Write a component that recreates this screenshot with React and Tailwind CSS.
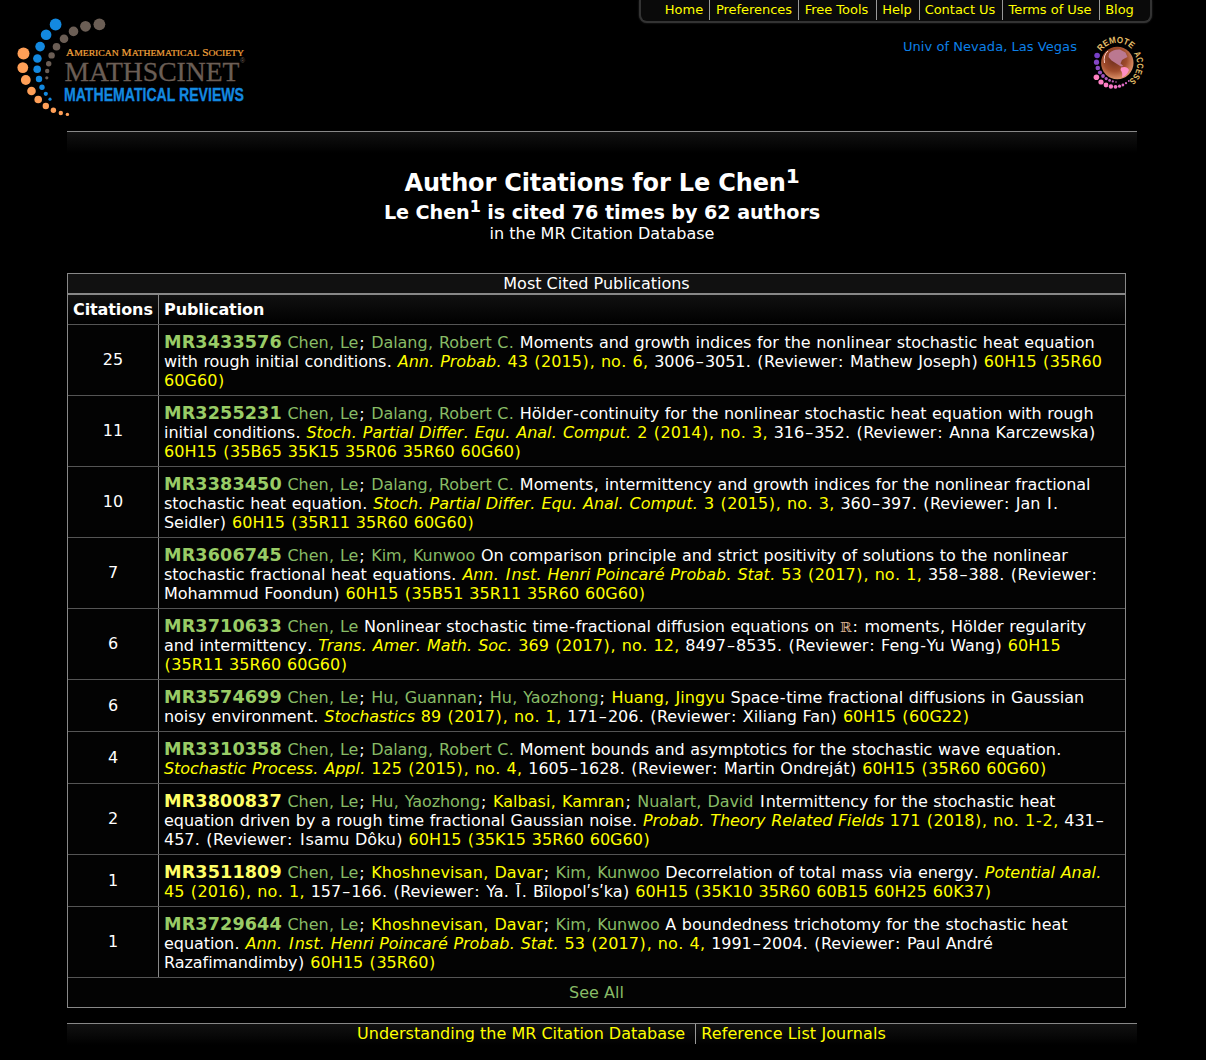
import React from 'react';

const STYLES = {
  M: 'text-[17.6px] font-bold text-[#99cc66] tracking-[0.12px]',
  Y: 'text-[17.6px] font-bold text-[#ffff66] tracking-[0.12px]',
  g: 'text-[#88bb66]',
  y: 'text-[#ffff00] tracking-[0.05px]',
  i: 'italic text-[#ffff00]',
  w: 'text-white',
  b: "font-['DejaVu_Serif','DejaVu_Sans',serif] text-[14px] text-[#d8b090]",
};

// Punctuation and the capital I are set a little wider than the letters around them.
const WIDE = {
  ',': 'mx-[0.36px]',
  '.': 'mx-[0.36px]',
  ';': 'mx-[0.93px]',
  ':': 'mx-[0.93px]',
  '(': 'mx-[0.5px]',
  ')': 'mx-[0.5px]',
  '-': 'mx-[0.75px]',
  '–': 'mx-[1.1px]',
  I: 'mx-[1px]',
  Ī: 'mx-[1px]',
};

const Spaced = ({ children }) =>
  children.split(/([,.;:()–IĪ-])/).map((t, k) => (WIDE[t] ? <span key={k} className={WIDE[t]}>{t}</span> : t));

// Each line is a list of [style, text] runs.
const le = ['g', 'Chen, Le'];
const dalang = ['g', 'Dalang, Robert C.'];
const kim = ['g', 'Kim, Kunwoo'];
const sep = ['w', '; '];
const sp = ['w', ' '];

const ROWS = [
  [25, [
    [['M', 'MR3433576'], sp, le, sep, dalang, ['w', ' Moments and growth indices for the nonlinear stochastic heat equation']],
    [['w', 'with rough initial conditions. '], ['i', 'Ann. Probab.'], ['y', ' 43 (2015), no. 6,'], ['w', ' 3006–3051. (Reviewer: Mathew Joseph) '], ['y', '60H15 (35R60']],
    [['y', '60G60)']],
  ]],
  [11, [
    [['M', 'MR3255231'], sp, le, sep, dalang, ['w', ' Hölder-continuity for the nonlinear stochastic heat equation with rough']],
    [['w', 'initial conditions. '], ['i', 'Stoch. Partial Differ. Equ. Anal. Comput.'], ['y', ' 2 (2014), no. 3,'], ['w', ' 316–352. (Reviewer: Anna Karczewska)']],
    [['y', '60H15 (35B65 35K15 35R06 35R60 60G60)']],
  ]],
  [10, [
    [['M', 'MR3383450'], sp, le, sep, dalang, ['w', ' Moments, intermittency and growth indices for the nonlinear fractional']],
    [['w', 'stochastic heat equation. '], ['i', 'Stoch. Partial Differ. Equ. Anal. Comput.'], ['y', ' 3 (2015), no. 3,'], ['w', ' 360–397. (Reviewer: Jan I.']],
    [['w', 'Seidler) '], ['y', '60H15 (35R11 35R60 60G60)']],
  ]],
  [7, [
    [['M', 'MR3606745'], sp, le, sep, kim, ['w', ' On comparison principle and strict positivity of solutions to the nonlinear']],
    [['w', 'stochastic fractional heat equations. '], ['i', 'Ann. Inst. Henri Poincaré Probab. Stat.'], ['y', ' 53 (2017), no. 1,'], ['w', ' 358–388. (Reviewer:']],
    [['w', 'Mohammud Foondun) '], ['y', '60H15 (35B51 35R11 35R60 60G60)']],
  ]],
  [6, [
    [['M', 'MR3710633'], sp, le, ['w', ' Nonlinear stochastic time-fractional diffusion equations on '], ['b', 'ℝ'], ['w', ': moments, Hölder regularity']],
    [['w', 'and intermittency. '], ['i', 'Trans. Amer. Math. Soc.'], ['y', ' 369 (2017), no. 12,'], ['w', ' 8497–8535. (Reviewer: Feng-Yu Wang) '], ['y', '60H15']],
    [['y', '(35R11 35R60 60G60)']],
  ]],
  [6, [
    [['M', 'MR3574699'], sp, le, sep, ['g', 'Hu, Guannan'], sep, ['g', 'Hu, Yaozhong'], sep, ['y', 'Huang, Jingyu'], ['w', ' Space-time fractional diffusions in Gaussian']],
    [['w', 'noisy environment. '], ['i', 'Stochastics'], ['y', ' 89 (2017), no. 1,'], ['w', ' 171–206. (Reviewer: Xiliang Fan) '], ['y', '60H15 (60G22)']],
  ]],
  [4, [
    [['M', 'MR3310358'], sp, le, sep, dalang, ['w', ' Moment bounds and asymptotics for the stochastic wave equation.']],
    [['i', 'Stochastic Process. Appl.'], ['y', ' 125 (2015), no. 4,'], ['w', ' 1605–1628. (Reviewer: Martin Ondreját) '], ['y', '60H15 (35R60 60G60)']],
  ]],
  [2, [
    [['Y', 'MR3800837'], sp, le, sep, ['g', 'Hu, Yaozhong'], sep, ['y', 'Kalbasi, Kamran'], sep, ['g', 'Nualart, David'], ['w', ' Intermittency for the stochastic heat']],
    [['w', 'equation driven by a rough time fractional Gaussian noise. '], ['i', 'Probab. Theory Related Fields'], ['y', ' 171 (2018), no. 1-2,'], ['w', ' 431–']],
    [['w', '457. (Reviewer: Isamu Dôku) '], ['y', '60H15 (35K15 35R60 60G60)']],
  ]],
  [1, [
    [['Y', 'MR3511809'], sp, le, sep, ['y', 'Khoshnevisan, Davar'], sep, kim, ['w', ' Decorrelation of total mass via energy. '], ['i', 'Potential Anal.']],
    [['y', '45 (2016), no. 1,'], ['w', ' 157–166. (Reviewer: Ya. Ī. Bīlopolʹsʹka) '], ['y', '60H15 (35K10 35R60 60B15 60H25 60K37)']],
  ]],
  [1, [
    [['M', 'MR3729644'], sp, le, sep, ['y', 'Khoshnevisan, Davar'], sep, kim, ['w', ' A boundedness trichotomy for the stochastic heat']],
    [['w', 'equation. '], ['i', 'Ann. Inst. Henri Poincaré Probab. Stat.'], ['y', ' 53 (2017), no. 4,'], ['w', ' 1991–2004. (Reviewer: Paul André']],
    [['w', 'Razafimandimby) '], ['y', '60H15 (35R60)']],
  ]],
];

const ORANGE = [[23.5, 53.5, 6], [22.8, 67.6, 5.4], [25.8, 80, 4.9], [31.5, 91, 4.3], [38.2, 99.5, 3.8], [45.8, 106, 3.2], [53.4, 110.3, 2.7], [60.8, 113, 2.2], [67.4, 114.4, 1.7]];
const BLUE = [[55.6, 24.5, 5.9], [46.1, 34.8, 5.3], [40.1, 46.6, 4.8], [37.4, 58.5, 4.3], [37.2, 69.2, 3.8], [39, 79, 3.2], [42, 87.2, 2.7], [45.8, 93.8, 2.1], [50, 99.2, 1.6]];
const GRAY = [[99.4, 24.3, 5.9], [85.5, 26.3, 5.4], [73.5, 31.4, 4.8], [64, 38.7, 4.3], [56.5, 46.8, 3.8], [51.6, 55.4, 3.2], [48.7, 63.7, 2.7], [47.2, 71, 2.2], [46.8, 77.8, 1.6]];

const Dots = ({ data, fill }) => data.map(([x, y, r]) => <circle key={x + '-' + y} cx={x} cy={y} r={r} fill={fill} />);

function Logo() {
  return (
    <svg className="block h-[120px] w-[260px] overflow-visible" viewBox="0 0 260 120">
      <Dots data={ORANGE} fill="#ff9f57" />
      <Dots data={BLUE} fill="#1389e0" />
      <Dots data={GRAY} fill="#6b5e55" />
      <text x="66" y="55.7" textLength="178" lengthAdjust="spacingAndGlyphs" fill="#f2a33c" stroke="#f2a33c" strokeWidth=".2" className="font-['Liberation_Serif',serif] text-[10px]">
        A<tspan fontSize="8.6">MERICAN</tspan> M<tspan fontSize="8.6">ATHEMATICAL</tspan> S<tspan fontSize="8.6">OCIETY</tspan>
      </text>
      <text x="64.5" y="81.2" textLength="175" lengthAdjust="spacingAndGlyphs" fill="#6b5e55" stroke="#6b5e55" strokeWidth=".3" className="font-['Liberation_Serif',serif] text-[27.5px]">MATHSCINET</text>
      <text x="240.2" y="62.6" fill="#6b5e55" className="font-['Liberation_Sans',sans-serif] text-[6.5px]">®</text>
      <text x="64" y="100.9" textLength="180" lengthAdjust="spacingAndGlyphs" fill="#1389e0" stroke="#1389e0" strokeWidth=".3" className="font-['Liberation_Sans',sans-serif] text-[17.6px] font-bold">MATHEMATICAL REVIEWS</text>
    </svg>
  );
}

const PURPLE = [[6.1, 19.5, 2.8, '#7840c8'], [5.5, 26.2, 2.6, '#8446c6'], [6.8, 32, 2.3, '#8c4cc4'], [9, 36.5, 2.1, '#9850c0'], [12, 40, 1.9, '#a456be'], [15.2, 42.6, 1.6, '#b05abe'], [18.6, 44.4, 1.4, '#bc60bc'], [21.8, 45.4, 1.1, '#c464bc'], [25, 46, 0.8, '#cc6cbc']];
const PINK = [[5.4, 41.2, 2.8, '#ff80c0'], [10, 46, 2.6, '#ff80c4'], [15, 49, 2.4, '#ff7ec4'], [19.9, 50.5, 2.2, '#f878c4'], [24.5, 50.8, 1.9, '#f074c4'], [28.5, 50.2, 1.6, '#e870c4'], [31.9, 49, 1.4, '#e06cc4'], [35, 47.2, 1.1, '#d868c4'], [37.8, 45, 0.9, '#d064c4']];

function RemoteBadge() {
  return (
    <svg className="block h-[54px] w-[56px] shrink-0 overflow-visible" viewBox="0 0 56 54">
      <defs>
        <radialGradient id="globe" cx="42%" cy="38%" r="62%">
          <stop offset="0" stopColor="#6a2c1c" />
          <stop offset=".6" stopColor="#a04c2c" />
          <stop offset="1" stopColor="#dc9068" />
        </radialGradient>
        <path id="remote" d="M10.2 15.4 A19.4 19.4 0 0 1 42 15" />
        <path id="access" d="M42.6 17.4 A19.4 19.4 0 0 1 36 45.4" />
      </defs>
      <circle cx="26.3" cy="27" r="16.2" fill="url(#globe)" />
      <path d="M18 17.5 Q22 13 29 13.5 L34.5 16.5 L36.5 21 L33.5 22.5 L31 24 L29.5 27.5 L32.5 30 L30 30.5 L26 28 L20.5 24.5 L17.5 21 Z" fill="#bb7890" />
      <path d="M30 31.5 Q36 29.5 38 34 Q36 39.5 31 41.5 Q32 36.5 29.5 34 Z" fill="#ff8fc4" />
      <path d="M13.5 27 Q12 19 17 15" fill="none" stroke="#ffd0c8" strokeWidth="1" />
      {[...PURPLE, ...PINK].map(([x, y, r, fill]) => <circle key={x + '-' + y} cx={x} cy={y} r={r} fill={fill} />)}
      <text fill="#e3bd68" className="font-['Liberation_Sans',sans-serif] text-[9px] font-bold"><textPath href="#remote" textLength="34.5" lengthAdjust="spacingAndGlyphs">REMOTE</textPath></text>
      <text fill="#e3bd68" className="font-['Liberation_Sans',sans-serif] text-[9px] font-bold"><textPath href="#access" textLength="30" lengthAdjust="spacingAndGlyphs">ACCESS</textPath></text>
    </svg>
  );
}

const NAV = [
  ['Home', 'w-[51px]'], ['Preferences', 'w-[89px]'], ['Free Tools', 'w-[78px] pr-0.5'], ['Help', 'w-[43px] pr-0.5'],
  ['Contact Us', 'w-[83px] pr-0.5'], ['Terms of Use', 'w-[97px] pr-0.5'], ['Blog', 'w-[39px]'],
];

function Row({ count, lines }) {
  return (
    <div className="flex border-b border-[#555]">
      <div className={`flex w-[91px] items-center justify-center border-r border-[#888] ${lines.length > 2 ? 'pb-0.5' : ''}`}>{count}</div>
      <div className="pt-2 pb-[5px] pl-[5px]">
        {lines.map((runs, n) => (
          <p key={n} className="h-[19px] leading-[19px] tracking-[-0.05px] whitespace-pre [word-spacing:0.6px]">
            {runs.map(([s, t], k) => <span key={k} className={STYLES[s]}><Spaced>{t}</Spaced></span>)}
          </p>
        ))}
      </div>
    </div>
  );
}

export default function App() {
  return (
    <div className="h-[1060px] w-[1206px] overflow-hidden bg-black font-['DejaVu_Sans',Verdana,sans-serif] text-base leading-[19px] text-white">
      <header className="flex h-[131px] justify-between">
        <Logo />
        <div className="flex w-[567px] flex-col">
          <nav className="flex h-[23px] w-[513px] rounded-b-lg border-x-2 border-b-2 border-[#333] bg-[#0a0a0a] pl-[18px] text-[13px] leading-[19px] text-[#ffff00] shadow-[0_0_2px_#333]">
            {NAV.map(([label, w], n) => (
              <a key={label} className={`${w} h-5 text-center tracking-[-0.03px] whitespace-nowrap ${n < NAV.length - 1 ? 'border-r border-[#999]' : ''}`}>{label}</a>
            ))}
          </nav>
          <div className="mt-[13px] flex pl-[264px]">
            <span className="w-[188px] text-[13px] leading-[21px] tracking-[0.05px] whitespace-nowrap text-[#0d80e8]">Univ of Nevada, Las Vegas</span>
            <RemoteBadge />
          </div>
        </div>
      </header>

      <div className="ml-[67px] h-[22px] w-[1070px] border-t border-[#888] bg-linear-to-b/srgb from-[#111] to-black" />

      <section className="ml-[67px] flex h-[120px] w-[1070px] flex-col items-center pt-[14px]">
        <h1 className="h-[33px] text-2xl leading-[32px] font-bold tracking-[-0.15px]">Author Citations for Le Chen<sup className="top-[-0.4em] text-[20px]">1</sup></h1>
        <h2 className="h-[24px] text-[19.2px] leading-[26px] font-bold tracking-[-0.08px]">Le Chen<sup className="top-[-0.42em] text-[16px]">1</sup> is cited 76 times by 62 authors</h2>
        <p>in the MR Citation Database</p>
      </section>

      <section className="ml-[67px] w-[1059px] border border-[#888] bg-[#030303]">
        <div className="h-[21px] border-b-2 border-[#888] bg-[#111] text-center leading-[19px]">Most Cited Publications</div>
        <div className="flex h-[30px] border-b border-[#555] bg-linear-to-b/srgb from-[#111] to-black leading-[29px] font-bold tracking-[-0.1px]">
          <div className="w-[91px] border-r border-[#888] pl-[5px]">Citations</div>
          <div className="pl-[5px]">Publication</div>
        </div>
        {ROWS.map(([count, lines], n) => <Row key={n} count={count} lines={lines} />)}
        <div className="h-[29px] text-center leading-[29px] text-[#88bb66]">See All</div>
      </section>

      <footer className="mt-[15px] ml-[67px] flex h-[22px] w-[1070px] justify-center border-t border-[#888] bg-linear-to-b/srgb from-[#111] to-black pl-[39px] leading-[20px] text-[#ffff00]">
        <a className="h-5 border-r border-[#999] pr-[10px]">Understanding the MR Citation Database</a>
        <a className="pl-[5px] tracking-[0.1px]">Reference List Journals</a>
      </footer>
    </div>
  );
}
